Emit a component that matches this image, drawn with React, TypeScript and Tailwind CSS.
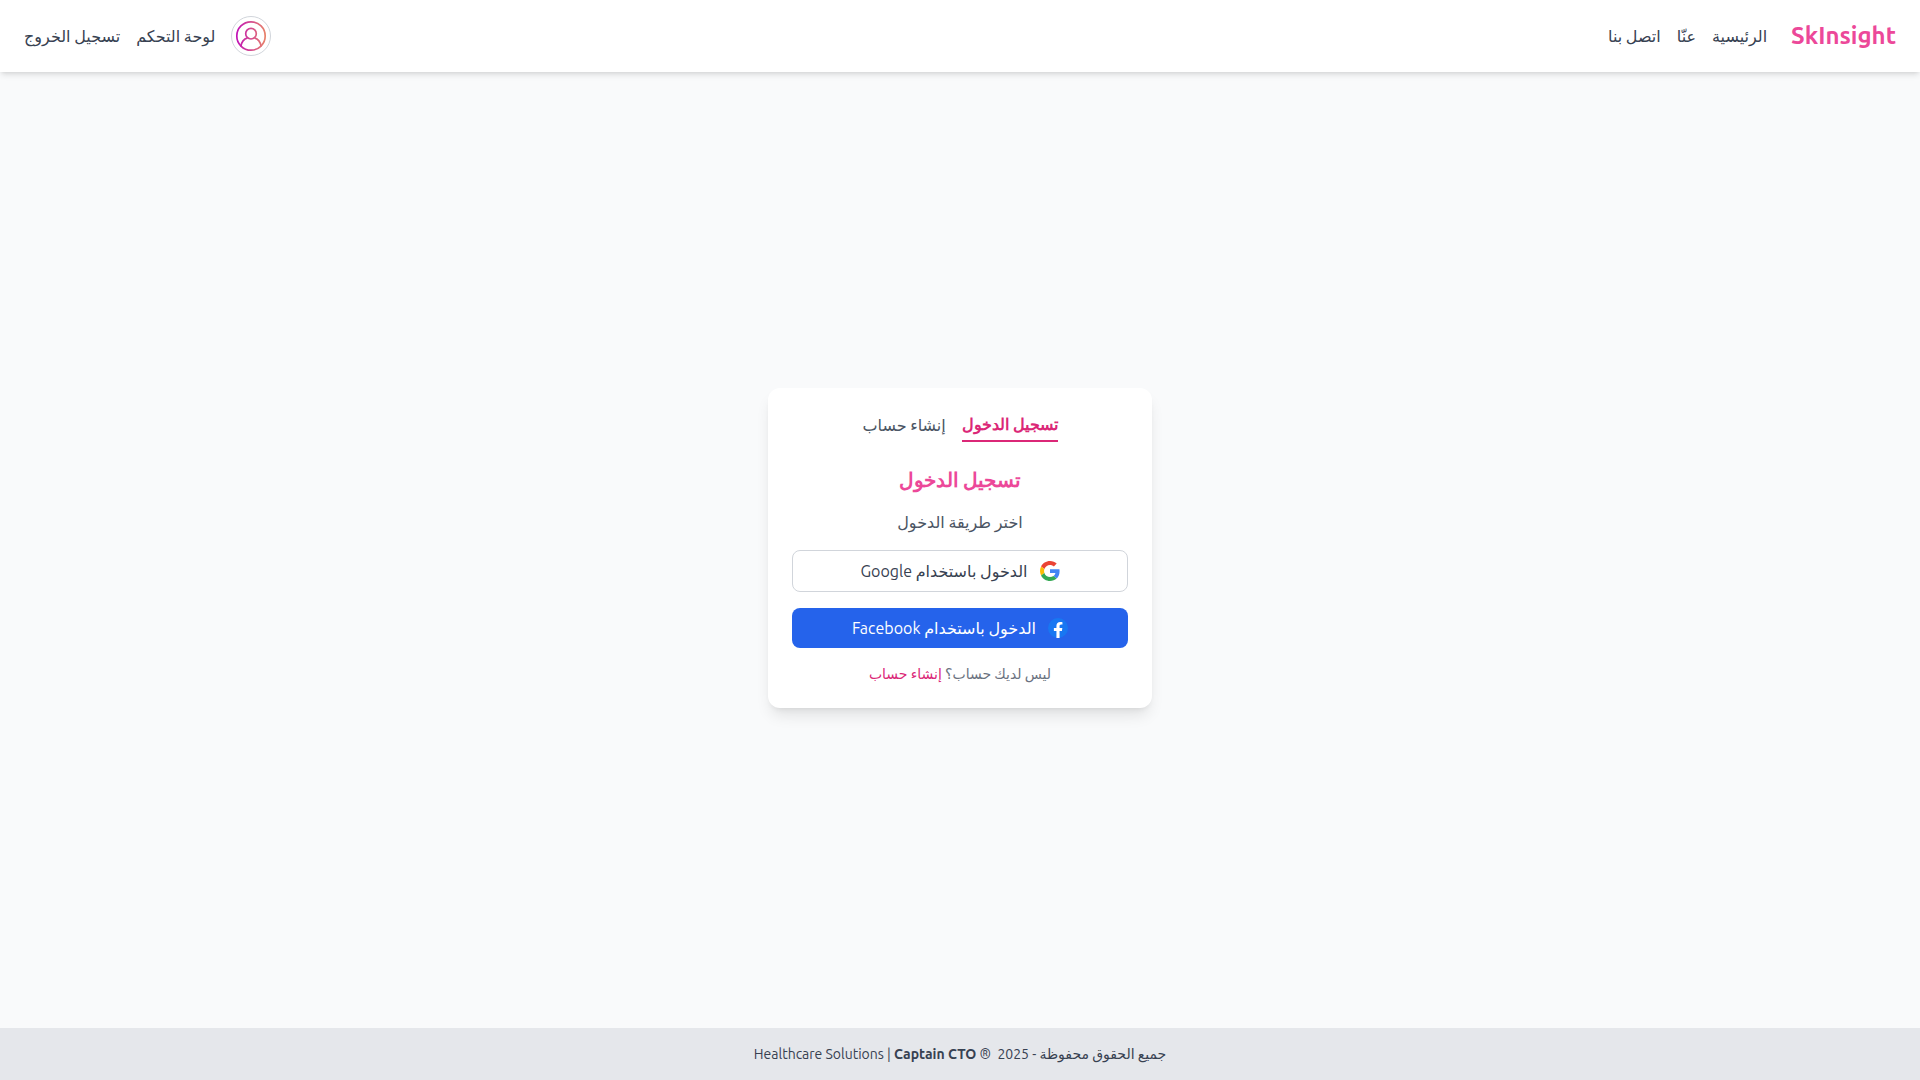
import React from "react";

function Avatar() {
  return (
    <svg viewBox="0 0 38 38" className="size-full" aria-hidden="true" fill="none" stroke="url(#avatar-gradient)" strokeWidth="1.7">
      <defs>
        <linearGradient id="avatar-gradient" gradientUnits="userSpaceOnUse" x1="4" y1="19" x2="34" y2="19">
          <stop offset="0" stopColor="#c010b8" />
          <stop offset="1" stopColor="#e88468" />
        </linearGradient>
      </defs>
      <circle cx="19" cy="19" r="14.200" />
      <circle cx="19" cy="16.700" r="5.300" />
      <path d="M9 29.300C9.500 25.200 12 22 15.600 20.900M29 29.300C28.500 25.200 26 22 22.400 20.900" />
    </svg>
  );
}

function GoogleLogo() {
  return (
    <svg viewBox="0 0 48 48" className="size-5" aria-hidden="true">
      <path fill="#EA4335" d="M24 9.500c3.540 0 6.710 1.220 9.210 3.600l6.850-6.850C35.900 2.380 30.470 0 24 0 14.620 0 6.510 5.380 2.560 13.220l7.980 6.190C12.430 13.720 17.740 9.500 24 9.500z" />
      <path fill="#4285F4" d="M46.980 24.550c0-1.570-.15-3.090-.38-4.550H24v9.020h12.940c-.58 2.960-2.260 5.480-4.780 7.180l7.730 6c4.510-4.180 7.090-10.360 7.090-17.650z" />
      <path fill="#FBBC05" d="M10.530 28.590c-.48-1.450-.76-2.990-.76-4.590s.27-3.140.76-4.590l-7.980-6.190C.92 16.460 0 20.120 0 24c0 3.880.92 7.540 2.560 10.780l7.970-6.190z" />
      <path fill="#34A853" d="M24 48c6.480 0 11.930-2.130 15.890-5.810l-7.730-6c-2.150 1.450-4.920 2.300-8.160 2.300-6.260 0-11.570-4.220-13.470-9.910l-7.980 6.190C6.510 42.620 14.620 48 24 48z" />
    </svg>
  );
}

function FacebookLogo() {
  return (
    <svg viewBox="0 0 24 24" className="size-5" aria-hidden="true">
      <circle cx="12" cy="12" r="12" fill="#1877F2" />
      <path fill="#fff" d="M16.671 15.543l.532-3.470h-3.328V9.823c0-.949.465-1.874 1.956-1.874h1.513V4.996s-1.374-.235-2.686-.235c-2.741 0-4.533 1.662-4.533 4.669v2.642H7.078v3.470h3.047v8.385a12.090 12.090 0 0 0 3.750 0v-8.385z" />
    </svg>
  );
}

export default function App() {
  return (
    <div dir="rtl" lang="ar" className="flex min-h-screen flex-col bg-[#f9fafb] font-[Ubuntu,'Noto_Sans','DejaVu_Sans',sans-serif] text-[#374151]">
      <header className="flex items-center justify-between bg-white px-6 py-4 shadow-md">
        <div className="flex items-center gap-6">
          <a href="#" className="text-2xl font-bold text-[#ec4899]">SkInsight</a>
          <nav className="flex gap-4">
            <a href="#home">الرئيسية</a>
            <a href="#about">عنّا</a>
            <a href="#contact">اتصل بنا</a>
          </nav>
        </div>
        <div className="flex items-center gap-4">
          <a href="#profile" aria-label="الملف الشخصي" className="size-10 overflow-hidden rounded-full border border-[#d1d5db]"><Avatar /></a>
          <a href="#dashboard">لوحة التحكم</a>
          <button type="button">تسجيل الخروج</button>
        </div>
      </header>
      <main className="flex grow items-center justify-center pb-1">
        <section className="w-96 rounded-xl bg-white p-6 text-center shadow-lg">
          <div className="mb-6 flex justify-center gap-4">
            <button type="button" className="border-b-2 border-[#db2777] pb-1 font-[Ubuntu,system-ui,sans-serif] font-bold text-[#db2777]">تسجيل الدخول</button>
            <button type="button" className="pb-1 text-[#4b5563]">إنشاء حساب</button>
          </div>
          <h1 className="mb-4 font-[Ubuntu,system-ui,sans-serif] text-xl font-bold text-[#ec4899]">تسجيل الدخول</h1>
          <p className="mb-4 text-[#4b5563]">اختر طريقة الدخول</p>
          <button type="button" className="mb-4 flex w-full items-center justify-center gap-3 rounded-lg border border-[#d1d5db] py-2"><GoogleLogo /><span>الدخول باستخدام Google</span></button>
          <button type="button" className="mb-4 flex w-full items-center justify-center gap-3 rounded-lg bg-[#2563eb] py-2 text-white"><FacebookLogo /><span>الدخول باستخدام Facebook</span></button>
          <p className="text-sm text-[#6b7280]">ليس لديك حساب؟ <a href="#register" className="text-[#db2777]">إنشاء حساب</a></p>
        </section>
      </main>
      <footer className="bg-[#e5e7eb] p-4 text-center text-sm">
        جميع الحقوق محفوظة - 2025 &nbsp;® <span dir="ltr">Healthcare Solutions | <strong>Captain CTO</strong></span>
      </footer>
    </div>
  );
}
